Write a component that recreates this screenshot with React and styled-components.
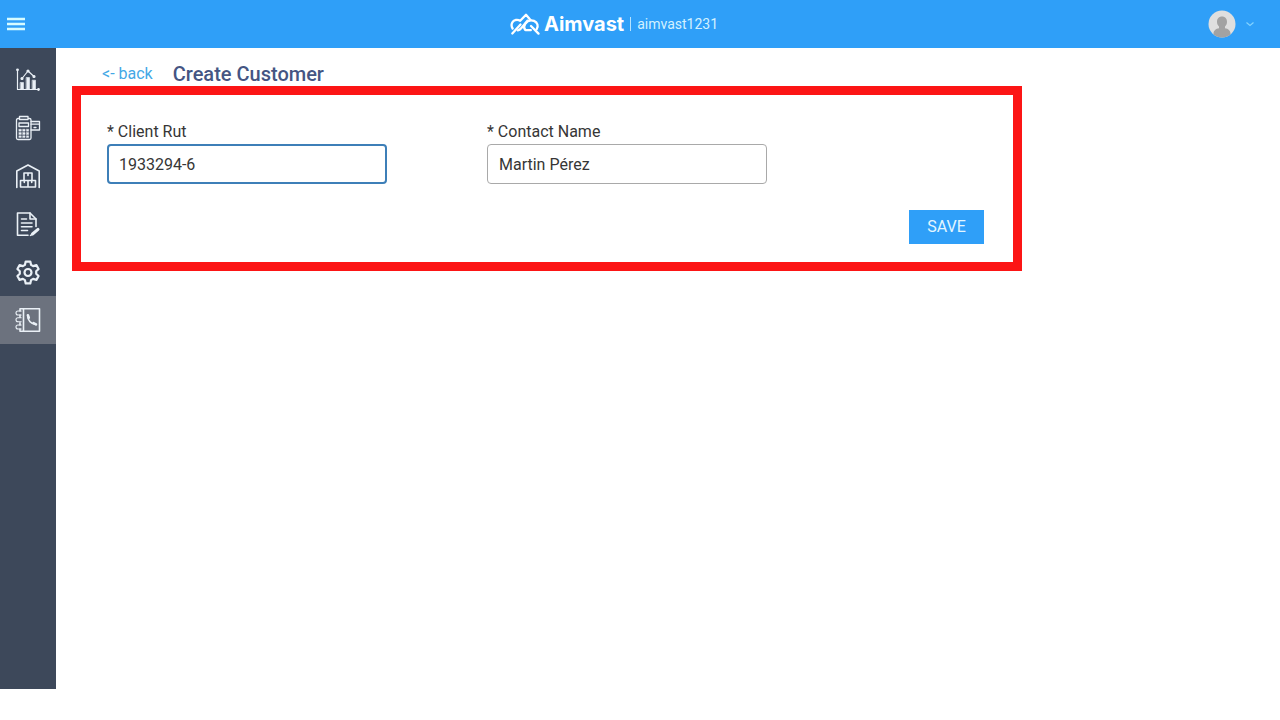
import React from "react";
import styled, { createGlobalStyle } from "styled-components";

const GlobalStyle = createGlobalStyle`
  *, *::before, *::after { box-sizing: border-box; }
  body {
    margin: 0;
    background: #ffffff;
    color: #363636;
    font-family: Roboto, "Liberation Sans", sans-serif;
    font-size: 16px;
    line-height: 24px;
  }
  button, input { font: inherit; }
`;

const Page = styled.div`
  display: flex;
  flex-direction: column;
  min-height: 100vh;
`;

const TopBar = styled.header`
  display: grid;
  grid-template-columns: 1fr auto 1fr 32px;
  align-items: center;
  height: 48px;
  padding: 0 26px 0 6px;
  background: #2f9ff8;
  color: #ffffff;
`;

const BarButton = styled.button`
  display: inline-flex;
  align-items: center;
  gap: 10px;
  padding: 0;
  border: 0;
  background: none;
  color: inherit;
  cursor: pointer;
  justify-self: ${(p) => (p.$end ? "end" : "start")};
  grid-column: ${(p) => (p.$end ? "3 / 5" : "1")};
`;

const Brand = styled.div`
  display: flex;
  align-items: center;
  gap: 4px;
`;

const BrandName = styled.span`
  font-family: Inter, Roboto, sans-serif;
  font-size: 20px;
  font-weight: 700;
`;

const Divider = styled.span`
  width: 1px;
  height: 14px;
  margin: 0 2px;
  background: #b5e3ff;
`;

const Account = styled.span`
  font-size: 14px;
  color: #d3f1ff;
`;

const Body = styled.div`
  display: flex;
  flex: 1;
`;

const Sidebar = styled.nav`
  display: flex;
  flex-direction: column;
  flex: none;
  width: 56px;
  padding-top: 8px;
  margin-bottom: 31px;
  background: #3d485a;
`;

const NavItem = styled.a`
  display: flex;
  align-items: center;
  justify-content: center;
  height: 48px;
  color: #eaf0f6;
  background: ${(p) => (p.$active ? "#6c727e" : "transparent")};
`;

const Main = styled.main`
  flex: 1;
  min-width: 0;
  padding: 14px 16px 0;
`;

const Heading = styled.div`
  display: flex;
  align-items: center;
  gap: 20px;
  padding-left: 30px;
`;

const BackLink = styled.a`
  color: #44a8e6;
  text-decoration: none;
`;

const Title = styled.h1`
  margin: 0;
  font-size: 20px;
  font-weight: 500;
  line-height: 24px;
  color: #455583;
`;

const Form = styled.form`
  display: flex;
  flex-direction: column;
  gap: 26px;
  max-width: 950px;
  padding: 25px 29px 18px 26px;
  border: 9px solid #fc1515;
`;

const Fields = styled.div`
  display: flex;
  flex-wrap: wrap;
  gap: 24px 100px;
`;

const Field = styled.div`
  display: flex;
  flex-direction: column;
  width: 280px;
`;

const Input = styled.input`
  width: 100%;
  height: 40px;
  padding: 0 ${(p) => (p.$active ? 10 : 11)}px;
  border: ${(p) => (p.$active ? "2px solid #3d7fb8" : "1px solid #a9a9a9")};
  border-radius: 4px;
  background: #ffffff;
  color: #363636;
  outline: none;
`;

const SaveButton = styled.button`
  align-self: flex-end;
  width: 75px;
  height: 34px;
  padding: 0;
  border: 0;
  background: #2f9ff8;
  color: #e3f6ff;
  cursor: pointer;
`;

const Icon = ({ width = 1.5, children }) => (
  <svg
    width="26"
    height="26"
    viewBox="0 0 26 26"
    fill="none"
    stroke="currentColor"
    strokeWidth={width}
    strokeLinecap="round"
    strokeLinejoin="round"
    aria-hidden="true"
  >
    {children}
  </svg>
);

const MenuIcon = () => (
  <svg width="20" height="20" viewBox="0 0 20 20" stroke="#d6fbff" strokeWidth="2.4" aria-hidden="true">
    <path d="M1 5h18M1 10h18M1 15h18" />
  </svg>
);

const LogoMark = () => (
  <svg width="30" height="24" viewBox="0 0 30 24" fill="none" stroke="currentColor" strokeWidth="2.3" strokeLinecap="round" strokeLinejoin="round" aria-hidden="true">
    <path d="M2.300 21.500 10.500 12.500" />
    <path d="M2.600 16.500C.6 13.500 1.600 9 5.600 8c1.900-.4 3.400 0 4.600.8L16 2.800l4.500 5.200" />
    <path d="M7.800 18.300c1.600-.3 2.500-1.100 3.600-2.400L17.600 8.600" />
    <path d="M15.200 17.800c-1.300-1.500-1.300-3.900 0-5.900 1.900-3 5.400-4.400 8.800-3 3.700 1.500 4.600 5.400 2.700 8.200" />
    <path d="M15.600 18.200h5.200M21 14l7.500 7.600" />
  </svg>
);

const ChartIcon = () => (
  <Icon width={1.2}>
    <path d="M2.500 2.500v20h20.500" />
    <circle cx="2.500" cy="2.800" r=".8" fill="currentColor" />
    <circle cx="23.500" cy="22.500" r=".8" fill="currentColor" />
    <path d="m7 11.500 6-7.500 6 5.500" />
    <circle cx="7" cy="11.500" r="1" fill="currentColor" />
    <circle cx="13" cy="4" r="1" fill="currentColor" />
    <circle cx="19" cy="9.500" r="1" fill="currentColor" />
    <path d="M5.500 15.500h3v6.500h-3zM11.500 10.500h3V22h-3zM17.500 13.200h3V22h-3z" fill="currentColor" strokeWidth=".6" />
  </Icon>
);

const TerminalIcon = () => (
  <Icon width={1.3}>
    <path d="M4.500 4.500V1.500h8.500v3M4.500 3.500H3a1.500 1.500 0 0 0-1.500 1.500v18A1.500 1.500 0 0 0 3 24.500h11.500A1.500 1.500 0 0 0 16 23V5a1.500 1.500 0 0 0-1.500-1.500H13M4.500 4.500H13" />
    <path d="M4 8h9.500v3.500H4z" />
    <path d="M16 6.500h8.500v8.500H16M16 9.200h8.500M19 12.500h2" />
    <path d="M4 14.200h2.300v2H4zM7.700 14.200H10v2H7.700zM11.400 14.200h2.300v2h-2.300zM4 17.500h2.300v2H4zM7.700 17.500H10v2H7.700zM11.400 17.500h2.300v2h-2.300zM4 20.800h2.300v1.600H4zM7.700 20.800H10v1.600H7.700zM11.400 20.800h2.300v1.600h-2.300z" fill="currentColor" strokeWidth=".4" />
  </Icon>
);

const WarehouseIcon = () => (
  <Icon width={1.6}>
    <path d="M1.800 24.500V8L13 2l11.200 6v16.500" />
    <path d="M9 10h8v7.500H9zM5.500 17.500H13v6.500H5.500zM13 17.500h7.500v6.500H13z" />
    <path d="M13 10.500v2M9.300 17.500v2M16.700 17.500v2" />
  </Icon>
);

const DocumentIcon = () => (
  <Icon width={1.6}>
    <path d="M13 24.200H2.500V2h12.500l6 6v7.500" />
    <path d="M15 2v6h6" />
    <path d="M6.500 8h5M6.500 12h10.500M6.500 15.700h10.500M6.500 19.500h6" />
    <path d="m17.500 23 5.500-4.600" strokeWidth="3" />
    <path d="m15.500 24.400 1.500-.8" />
  </Icon>
);

const GearIcon = () => (
  <Icon width={2.2}>
    <circle cx="13" cy="13.500" r="3.500" />
    <path d="M10.700 2.600h4.600l.8 3.300 2 1.200 3.300-1 2.200 3.900-2.400 2.300v2.400l2.400 2.300-2.200 3.900-3.300-1-2 1.200-.8 3.300h-4.600l-.8-3.300-2-1.200-3.300 1L2.400 17l2.400-2.300v-2.400L2.400 10l2.200-3.900 3.300 1 2-1.200z" />
  </Icon>
);

const ContactsIcon = () => (
  <Icon width={1.6}>
    <path d="M5 4V1.800h19.500v22.400H5V22M5 8v2.300M5 15.700V18M8.500 2v22" />
    <path d="M6.200 4H3a1.500 1.500 0 0 0 0 4h3.200M6.200 10.800H3a1.500 1.500 0 0 0 0 4h3.200M6.200 18H3a1.500 1.500 0 0 0 0 4h3.200" strokeWidth="1.1" />
    <path d="M12.800 8.500c-.3 4.800 3.500 8.800 8.200 9" strokeWidth="1.700" />
    <path d="m12.900 8.300.9 2.500M18.500 16.200l2.500 1.200" strokeWidth="2.600" />
  </Icon>
);

const Avatar = () => (
  <svg width="28" height="28" viewBox="0 0 28 28" aria-hidden="true">
    <defs>
      <clipPath id="avatar-clip"><circle cx="14" cy="14" r="13.500" /></clipPath>
    </defs>
    <g clipPath="url(#avatar-clip)">
      <rect width="28" height="28" fill="#dfdfdf" />
      <path d="M5.500 28v-4.500c0-3 2.500-4.800 5.500-5.300v-1.700c-1.300-1-2-2.700-2-4.700 0-3.200 2-5.300 5-5.300s5 2.100 5 5.300c0 2-.7 3.700-2 4.700v1.700c3 .5 5.500 2.300 5.500 5.300V28z" fill="#a2a2a2" />
    </g>
  </svg>
);

const Chevron = () => (
  <svg width="8" height="6" viewBox="0 0 8 6" fill="none" stroke="#83d3ff" strokeWidth="1.2" aria-hidden="true">
    <path d="m.5 1.500 3.500 3 3.500-3" />
  </svg>
);

const navItems = [
  { label: "Dashboard", icon: ChartIcon },
  { label: "Point of sale", icon: TerminalIcon },
  { label: "Warehouse", icon: WarehouseIcon },
  { label: "Documents", icon: DocumentIcon },
  { label: "Settings", icon: GearIcon },
  { label: "Contacts", icon: ContactsIcon, active: true },
];

export default function App() {
  return (
    <>
      <GlobalStyle />
      <Page>
        <TopBar>
          <BarButton type="button" aria-label="Menu"><MenuIcon /></BarButton>
          <Brand>
            <LogoMark />
            <BrandName>Aimvast</BrandName>
            <Divider />
            <Account>aimvast1231</Account>
          </Brand>
          <BarButton type="button" aria-label="Account" $end><Avatar /><Chevron /></BarButton>
        </TopBar>
        <Body>
          <Sidebar aria-label="Main">
            {navItems.map(({ label, icon: Glyph, active }) => (
              <NavItem key={label} href="#" aria-label={label} $active={active}>
                <Glyph />
              </NavItem>
            ))}
          </Sidebar>
          <Main>
            <Heading>
              <BackLink href="#">&lt;- back</BackLink>
              <Title>Create Customer</Title>
            </Heading>
            <Form onSubmit={(e) => e.preventDefault()}>
              <Fields>
                <Field>
                  <label htmlFor="client-rut">* Client Rut</label>
                  <Input id="client-rut" defaultValue="1933294-6" $active />
                </Field>
                <Field>
                  <label htmlFor="contact-name">* Contact Name</label>
                  <Input id="contact-name" defaultValue="Martin Pérez" />
                </Field>
              </Fields>
              <SaveButton type="submit">SAVE</SaveButton>
            </Form>
          </Main>
        </Body>
      </Page>
    </>
  );
}
